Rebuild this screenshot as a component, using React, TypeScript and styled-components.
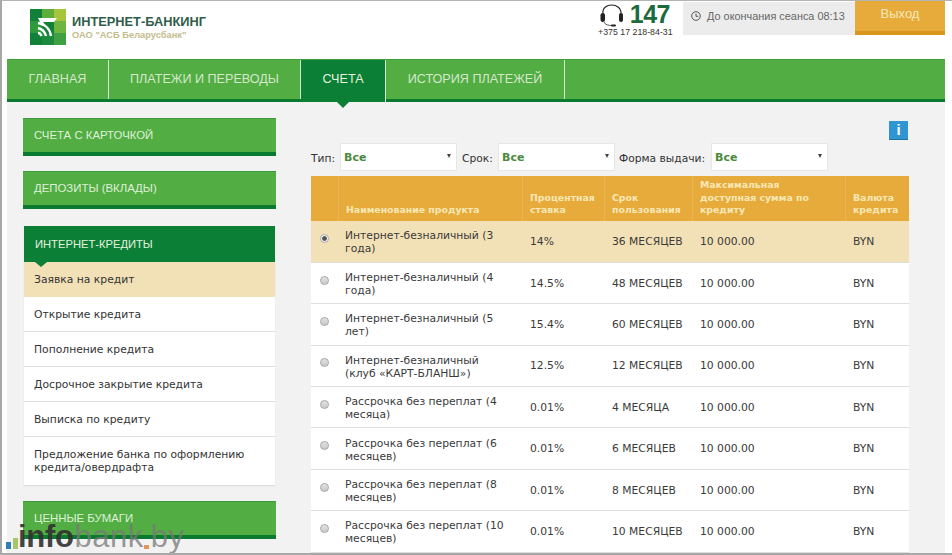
import React from "react";
import styled, { createGlobalStyle } from "styled-components";

const GlobalStyle = createGlobalStyle`
  html, body {
    margin: 0;
    padding: 0;
    background: #ffffff;
  }
  * {
    box-sizing: border-box;
  }
`;

const Frame = styled.div`
  position: relative;
  width: 952px;
  height: 555px;
  overflow: hidden;
  background: #ffffff;
  border-top: 1px solid #b4b4b4;
  border-left: 2px solid #a8a8a8;
  border-bottom: 2px solid #a8a8a8;
  padding-left: 5px;
  font-family: "DejaVu Sans", sans-serif;
`;

const Page = styled.div`
  width: 938px;
`;

const Header = styled.header`
  display: flex;
  justify-content: space-between;
  height: 58px;
`;

const Brand = styled.div`
  display: flex;
  align-items: flex-start;
  gap: 6px;
  padding: 8px 0 0 23px;
`;

const BrandText = styled.div`
  padding-top: 5px;
`;

const BrandTitle = styled.div`
  font-family: "Liberation Sans", sans-serif;
  font-size: 12.8px;
  line-height: 15px;
  font-weight: 700;
  color: #2f5d4a;
`;

const BrandSub = styled.div`
  font-family: "Liberation Sans", sans-serif;
  font-size: 9.3px;
  line-height: 12px;
  font-weight: 700;
  color: #c5bc8c;
`;

const HeaderRight = styled.div`
  display: flex;
  align-items: flex-start;
`;

const Phone = styled.div`
  width: 73px;
  margin-right: 11px;
  padding-top: 1px;
`;

const PhoneTop = styled.div`
  display: flex;
  align-items: center;
  justify-content: space-between;
  height: 25px;
`;

const PhoneShort = styled.span`
  font-family: "Liberation Sans", sans-serif;
  font-size: 25px;
  line-height: 25px;
  font-weight: 700;
  color: #1d6a3c;
  letter-spacing: -0.5px;
  margin-right: 2px;
`;

const PhoneNumber = styled.div`
  font-family: "Liberation Sans", sans-serif;
  font-size: 8.8px;
  line-height: 11px;
  color: #333333;
  white-space: nowrap;
  margin-left: -1px;
`;

const Session = styled.div`
  display: flex;
  align-items: center;
  gap: 6px;
  width: 172px;
  height: 33px;
  margin-top: 1px;
  padding: 0 0 5px 8px;
  background: #ececec;
  font-family: "Liberation Sans", sans-serif;
  font-size: 10.9px;
  color: #666666;
  white-space: nowrap;
`;

const Logout = styled.div`
  width: 90px;
  height: 34px;
  padding-top: 5px;
  background: #e7ab3c;
  border-bottom: 4px solid #d9951c;
  font-family: "Liberation Sans", sans-serif;
  font-size: 13px;
  line-height: 15px;
  color: #f6e9b8;
  text-align: center;
`;

const Nav = styled.nav`
  display: flex;
  height: 43px;
  background: #52ad43;
  border-top: 1px solid #3f9a3b;
  border-bottom: 3px solid #0b7a31;
`;

const NavItem = styled.div<{ $active?: boolean; $width: number }>`
  position: relative;
  display: flex;
  align-items: center;
  justify-content: center;
  width: ${p => p.$width}px;
  margin-bottom: ${p => (p.$active ? "-3px" : "0")};
  padding-bottom: ${p => (p.$active ? "5px" : "2px")};
  background: ${p => (p.$active ? "#0b7f36" : "transparent")};
  border-right: 1px solid #d6ecd0;
  font-family: "Liberation Sans", sans-serif;
  font-size: 12.6px;
  color: ${p => (p.$active ? "#e4f2df" : "#d5e8cc")};
  white-space: nowrap;
  ${p =>
    p.$active &&
    `
    &:after {
      content: "";
      position: absolute;
      left: 50%;
      bottom: -6px;
      margin-left: -6px;
      border-left: 6px solid transparent;
      border-right: 6px solid transparent;
      border-top: 6px solid #0b7f36;
    }
  `}
`;

const Content = styled.div`
  display: flex;
  gap: 35px;
  height: 453px;
  padding: 16px 0 0 16px;
  background: #f2f2f2;
`;

const Sidebar = styled.aside`
  display: flex;
  flex-direction: column;
  width: 253px;
`;

const SideButton = styled.div`
  display: flex;
  align-items: center;
  height: 38px;
  margin-bottom: 15px;
  padding: 0 0 1px 11px;
  background: #52ad43;
  border-top: 1px solid #3f9a3b;
  border-bottom: 4px solid #0b7a31;
  font-family: "Liberation Sans", sans-serif;
  font-size: 11.4px;
  color: #dff0d9;
`;

const SideGroup = styled.div`
  margin: 2px 1px 16px;
  background: #ffffff;
  box-shadow: 0 1px 1px #dddddd;
`;

const SideGroupHead = styled.div`
  position: relative;
  display: flex;
  align-items: center;
  height: 36px;
  padding-left: 11px;
  background: #0b7f36;
  font-family: "Liberation Sans", sans-serif;
  font-size: 11.2px;
  color: #e4f2df;
  &:after {
    content: "";
    position: absolute;
    left: 11px;
    bottom: -5px;
    border-left: 6px solid transparent;
    border-right: 6px solid transparent;
    border-top: 5px solid #0b7f36;
  }
`;

const SideLink = styled.div<{ $active?: boolean; $tall?: boolean }>`
  display: flex;
  align-items: center;
  height: ${p => (p.$tall ? "48px" : "35px")};
  padding-left: 10px;
  background: ${p => (p.$active ? "#f2e1b6" : "#ffffff")};
  border-bottom: 1px solid ${p => (p.$active ? "#f2e1b6" : "#dedede")};
  font-size: 10.75px;
  line-height: 13px;
  color: #333333;
  &:last-child {
    border-bottom: 0;
  }
`;

const Main = styled.main`
  width: 598px;
`;

const InfoRow = styled.div`
  display: flex;
  justify-content: flex-end;
  height: 25px;
  padding: 3px 1px 0 0;
`;

const InfoButton = styled.div`
  width: 19px;
  height: 19px;
  background: #2f95d3;
  border-bottom: 1px solid #1f6f9f;
  font-family: "Liberation Sans", sans-serif;
  font-size: 15px;
  line-height: 18px;
  font-weight: 700;
  color: #ffffff;
  text-align: center;
`;

const Filters = styled.div`
  display: flex;
  align-items: center;
  height: 28px;
  margin-bottom: 5px;
  font-size: 10.7px;
  color: #333333;
`;

const FilterLabel = styled.span<{ $width: number }>`
  width: ${p => p.$width}px;
  padding-top: 3px;
  white-space: nowrap;
`;

const Select = styled.div`
  display: flex;
  align-items: center;
  justify-content: space-between;
  width: 117px;
  height: 28px;
  padding: 0 5px 0 3px;
  background: #ffffff;
  border: 1px solid #e4e8e4;
  font-size: 11px;
  font-weight: 700;
  color: #4a8a3a;
  &:after {
    content: "";
    border-left: 2.5px solid transparent;
    border-right: 2.5px solid transparent;
    border-top: 4px solid #444444;
    margin-top: -2px;
  }
`;

const FilterGap = styled.span<{ $width: number }>`
  width: ${p => p.$width}px;
`;

const Table = styled.table`
  width: 598px;
  border-collapse: collapse;
  table-layout: fixed;
  background: #ffffff;
`;

const HeadCell = styled.th<{ $width: number }>`
  width: ${p => p.$width}px;
  height: 45px;
  padding: 0 4px 4px 7.5px;
  background: #e7ab3c;
  border-left: 1px solid #e9b453;
  vertical-align: bottom;
  text-align: left;
  font-size: 9.35px;
  line-height: 12.6px;
  font-weight: 700;
  color: #f8e8b6;
  &:first-child {
    border-left: 0;
  }
`;

const Row = styled.tr<{ $active?: boolean }>`
  height: 41.4px;
  background: ${p => (p.$active ? "#f2e1b6" : "#ffffff")};
  border-bottom: 1px solid #dedede;
`;

const Cell = styled.td`
  padding: 0 4px 0 8px;
  font-size: 10.75px;
  line-height: 13px;
  color: #3a3a3a;
  vertical-align: middle;
`;

const NameCell = styled(Cell)`
  padding: 2px 4px 0 7px;
`;

const RadioCell = styled.td`
  padding: 0 0 6px 9px;
  vertical-align: middle;
`;

const Radio = styled.span<{ $checked?: boolean }>`
  display: block;
  width: 9px;
  height: 9px;
  border-radius: 50%;
  border: 1px solid #a9a9a9;
  background: ${p =>
    p.$checked
      ? "radial-gradient(circle, #555555 0, #555555 2px, #f4f4f4 2.6px)"
      : "linear-gradient(#e2e2e2, #c9c9c9)"};
`;

const Watermark = styled.div`
  position: absolute;
  left: 4px;
  bottom: 4px;
  display: flex;
  align-items: flex-end;
  font-family: "Liberation Sans", sans-serif;
  font-size: 31px;
  line-height: 24px;
  pointer-events: none;
`;

const WatermarkDot = styled.span<{ $color: string; $width: number; $height: number }>`
  width: ${p => p.$width}px;
  height: ${p => p.$height}px;
  margin-right: 2px;
  background: ${p => p.$color};
`;

const WatermarkDark = styled.span`
  margin-left: -2px;
  margin-right: 1px;
  color: rgba(50, 50, 50, 0.92);
  font-weight: 700;
  letter-spacing: -0.3px;
`;

const WatermarkLight = styled.span`
  color: rgba(120, 120, 120, 0.75);
  letter-spacing: 0.5px;
`;

const products = [
  { name: <>Интернет-безналичный (3<br />года)</>, rate: "14%", term: "36 МЕСЯЦЕВ" },
  { name: <>Интернет-безналичный (4<br />года)</>, rate: "14.5%", term: "48 МЕСЯЦЕВ" },
  { name: <>Интернет-безналичный (5<br />лет)</>, rate: "15.4%", term: "60 МЕСЯЦЕВ" },
  { name: <>Интернет-безналичный<br />(клуб «КАРТ-БЛАНШ»)</>, rate: "12.5%", term: "12 МЕСЯЦЕВ" },
  { name: <>Рассрочка без переплат (4<br />месяца)</>, rate: "0.01%", term: "4 МЕСЯЦА" },
  { name: <>Рассрочка без переплат (6<br />месяцев)</>, rate: "0.01%", term: "6 МЕСЯЦЕВ" },
  { name: <>Рассрочка без переплат (8<br />месяцев)</>, rate: "0.01%", term: "8 МЕСЯЦЕВ" },
  { name: <>Рассрочка без переплат (10<br />месяцев)</>, rate: "0.01%", term: "10 МЕСЯЦЕВ" },
];

const creditLinks = [
  "Открытие кредита",
  "Пополнение кредита",
  "Досрочное закрытие кредита",
  "Выписка по кредиту",
];

function Logo() {
  return (
    <svg width="36" height="36" viewBox="0 0 36 36">
      <rect width="36" height="36" fill="#11813a" />
      <rect x="12" width="12" height="12" fill="#5fae3c" />
      <rect x="24" width="12" height="12" fill="#a5c63a" />
      <rect y="12" width="12" height="12" fill="#2f9a3d" />
      <rect x="24" y="12" width="12" height="12" fill="#6db53f" />
      <rect x="24" y="24" width="12" height="12" fill="#3f9f42" />
      <rect x="12" y="24" width="12" height="12" fill="#1c8a3c" />
      <path d="M8 9 H27 L24 13 H13 L16 17 H12 Z" fill="#ffffff" />
      <g fill="none" stroke="#ffffff" strokeWidth="2.4">
        <path d="M8 14 C15 15 20 20 21 27" />
        <path d="M8 19 C12 20 15 23 16 27" />
        <path d="M8 24 C9.500 24 11 25.500 11.500 27" />
      </g>
    </svg>
  );
}

function Headset() {
  return (
    <svg width="26" height="25" viewBox="0 0 26 25">
      <path d="M4 12 C2 0 23 0 22 12" fill="none" stroke="#222222" strokeWidth="1.1" />
      <rect x="1.500" y="11" width="4.500" height="9" rx="2.200" fill="#222222" />
      <rect x="20" y="11" width="4" height="9" rx="2" fill="#222222" />
      <path d="M5 20 C6 23 10 23.500 13 23.500" fill="none" stroke="#444444" strokeWidth="0.9" />
      <rect x="12" y="22.500" width="5" height="2" rx="1" fill="#222222" />
    </svg>
  );
}

function ClockIcon() {
  return (
    <svg width="10" height="10" viewBox="0 0 10 10">
      <circle cx="5" cy="5" r="4.300" fill="none" stroke="#555555" strokeWidth="1" />
      <path d="M5 2.500 V5.300 H7.300" fill="none" stroke="#555555" strokeWidth="1" />
    </svg>
  );
}

export default function App() {
  return (
    <>
      <GlobalStyle />
      <Frame>
        <Page>
          <Header>
            <Brand>
              <Logo />
              <BrandText>
                <BrandTitle>ИНТЕРНЕТ-БАНКИНГ</BrandTitle>
                <BrandSub>ОАО "АСБ Беларусбанк"</BrandSub>
              </BrandText>
            </Brand>
            <HeaderRight>
              <Phone>
                <PhoneTop>
                  <Headset />
                  <PhoneShort>147</PhoneShort>
                </PhoneTop>
                <PhoneNumber>+375 17 218-84-31</PhoneNumber>
              </Phone>
              <Session>
                <ClockIcon />
                До окончания сеанса 08:13
              </Session>
              <Logout>Выход</Logout>
            </HeaderRight>
          </Header>
          <Nav>
            <NavItem $width={102}>ГЛАВНАЯ</NavItem>
            <NavItem $width={192}>ПЛАТЕЖИ И ПЕРЕВОДЫ</NavItem>
            <NavItem $width={85} $active>СЧЕТА</NavItem>
            <NavItem $width={179}>ИСТОРИЯ ПЛАТЕЖЕЙ</NavItem>
          </Nav>
          <Content>
            <Sidebar>
              <SideButton>СЧЕТА С КАРТОЧКОЙ</SideButton>
              <SideButton>ДЕПОЗИТЫ (ВКЛАДЫ)</SideButton>
              <SideGroup>
                <SideGroupHead>ИНТЕРНЕТ-КРЕДИТЫ</SideGroupHead>
                <SideLink $active>Заявка на кредит</SideLink>
                {creditLinks.map(link => (
                  <SideLink key={link}>{link}</SideLink>
                ))}
                <SideLink $tall>
                  Предложение банка по оформлению
                  <br />
                  кредита/овердрафта
                </SideLink>
              </SideGroup>
              <SideButton>ЦЕННЫЕ БУМАГИ</SideButton>
            </Sidebar>
            <Main>
              <InfoRow>
                <InfoButton>i</InfoButton>
              </InfoRow>
              <Filters>
                <FilterLabel $width={29}>Тип:</FilterLabel>
                <Select>Все</Select>
                <FilterGap $width={5} />
                <FilterLabel $width={36}>Срок:</FilterLabel>
                <Select>Все</Select>
                <FilterGap $width={4} />
                <FilterLabel $width={92}>Форма выдачи:</FilterLabel>
                <Select>Все</Select>
              </Filters>
              <Table>
                <thead>
                  <tr>
                    <HeadCell $width={27} />
                    <HeadCell $width={184}>Наименование продукта</HeadCell>
                    <HeadCell $width={82}>Процентная ставка</HeadCell>
                    <HeadCell $width={88}>Срок пользования</HeadCell>
                    <HeadCell $width={153}>
                      Максимальная
                      <br />
                      доступная сумма по
                      <br />
                      кредиту
                    </HeadCell>
                    <HeadCell $width={64}>Валюта кредита</HeadCell>
                  </tr>
                </thead>
                <tbody>
                  {products.map((product, i) => (
                    <Row key={i} $active={i === 0}>
                      <RadioCell>
                        <Radio $checked={i === 0} />
                      </RadioCell>
                      <NameCell>{product.name}</NameCell>
                      <Cell>{product.rate}</Cell>
                      <Cell>{product.term}</Cell>
                      <Cell>10 000.00</Cell>
                      <Cell>BYN</Cell>
                    </Row>
                  ))}
                </tbody>
              </Table>
            </Main>
          </Content>
        </Page>
        <Watermark>
          <WatermarkDot $color="#2f7fb5" $width={5} $height={7} />
          <WatermarkDot $color="#a9c46a" $width={5} $height={11} />
          <WatermarkDark>info</WatermarkDark>
          <WatermarkLight>bank</WatermarkLight>
          <WatermarkDot $color="#e2975a" $width={5} $height={4} />
          <WatermarkLight>by</WatermarkLight>
        </Watermark>
      </Frame>
    </>
  );
}
